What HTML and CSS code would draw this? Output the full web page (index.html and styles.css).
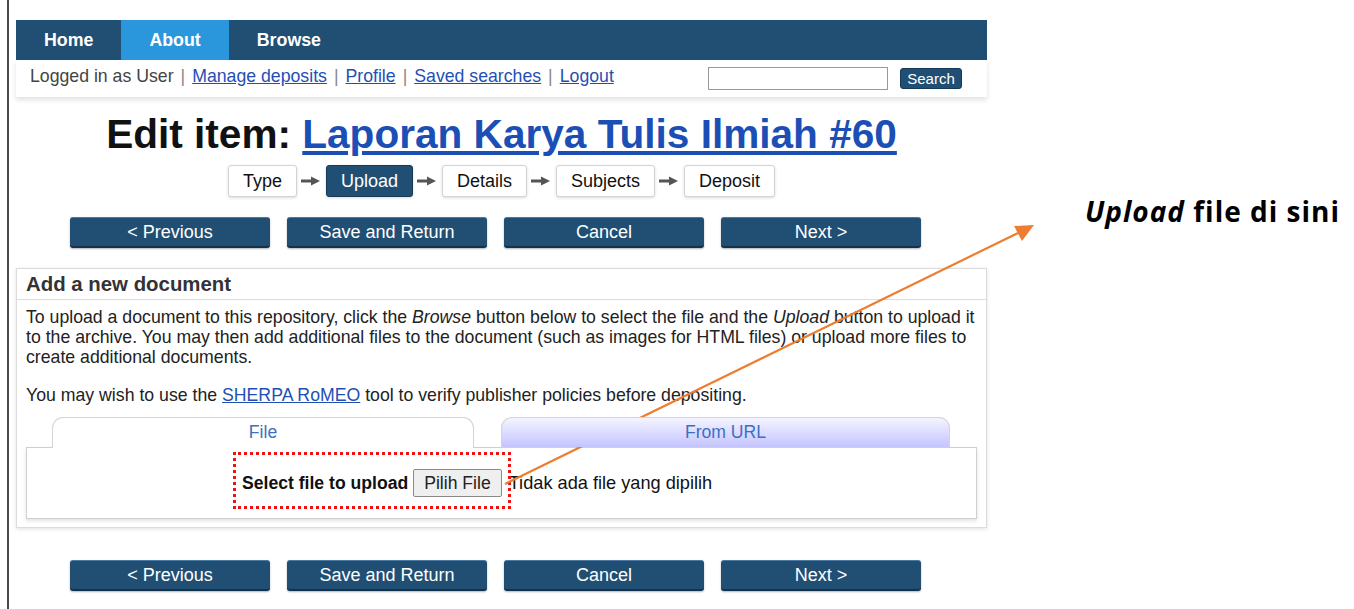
FILE: index.html
```html
<!DOCTYPE html>
<html>
<head>
<meta charset="utf-8">
<link rel="stylesheet" href="styles.css">
</head>
<body>
<div class="page">
  <div class="site">
    <nav class="menu">
      <a class="menu-item">Home</a>
      <a class="menu-item active">About</a>
      <a class="menu-item">Browse</a>
    </nav>
    <div class="userbar">
      <div class="userlinks">
        <span>Logged in as User</span><span class="sep">|</span><a href="#">Manage deposits</a><span class="sep">|</span><a href="#">Profile</a><span class="sep">|</span><a href="#">Saved searches</a><span class="sep">|</span><a href="#">Logout</a>
      </div>
      <div class="search">
        <input type="text" class="search-input">
        <button class="search-btn">Search</button>
      </div>
    </div>

    <h1 class="title">Edit item: <a href="#">Laporan Karya Tulis Ilmiah #60</a></h1>

    <div class="workflow">
      <span class="step">Type</span>
      <svg class="arrow" width="29" height="12" viewBox="0 0 29 12"><rect x="4" y="4.5" width="12" height="3" fill="#555"/><polygon points="14,1.5 23,6 14,10.5" fill="#555"/></svg>
      <span class="step current">Upload</span>
      <svg class="arrow" width="29" height="12" viewBox="0 0 29 12"><rect x="4" y="4.5" width="12" height="3" fill="#555"/><polygon points="14,1.5 23,6 14,10.5" fill="#555"/></svg>
      <span class="step">Details</span>
      <svg class="arrow" width="29" height="12" viewBox="0 0 29 12"><rect x="4" y="4.5" width="12" height="3" fill="#555"/><polygon points="14,1.5 23,6 14,10.5" fill="#555"/></svg>
      <span class="step">Subjects</span>
      <svg class="arrow" width="29" height="12" viewBox="0 0 29 12"><rect x="4" y="4.5" width="12" height="3" fill="#555"/><polygon points="14,1.5 23,6 14,10.5" fill="#555"/></svg>
      <span class="step">Deposit</span>
    </div>

    <div class="buttons top">
      <button class="btn">&lt; Previous</button>
      <button class="btn">Save and Return</button>
      <button class="btn">Cancel</button>
      <button class="btn">Next &gt;</button>
    </div>

    <section class="panel">
      <div class="panel-head">Add a new document</div>
      <div class="panel-body">
        <p class="para">To upload a document to this repository, click the <i>Browse</i> button below to select the file and the <i>Upload</i> button to upload it to the archive. You may then add additional files to the document (such as images for HTML files) or upload more files to create additional documents.</p>
        <p class="para second">You may wish to use the <a href="#">SHERPA RoMEO</a> tool to verify publisher policies before depositing.</p>
        <div class="tabs">
          <div class="tab tab-file">File</div>
          <div class="tab tab-url">From URL</div>
        </div>
        <div class="tab-content">
          <b class="upload-label">Select file to upload</b>
          <span class="file-btn">Pilih File</span>
          <span class="file-none">Tidak ada file yang dipilih</span>
        </div>
      </div>
    </section>

    <div class="buttons bottom">
      <button class="btn">&lt; Previous</button>
      <button class="btn">Save and Return</button>
      <button class="btn">Cancel</button>
      <button class="btn">Next &gt;</button>
    </div>
  </div>
</div>

<div class="mark"></div>
<svg class="callout-arrow" width="1354" height="609" viewBox="0 0 1354 609">
  <line x1="505" y1="484" x2="1018" y2="233" stroke="#ed7d31" stroke-width="2.2"/>
  <polygon points="1034,225 1014,226 1022,241" fill="#ed7d31"/>
</svg>
<div class="callout-text"><i>Upload</i> file di sini</div>
</body>
</html>
```
FILE: styles.css
```css
html, body {
  margin: 0;
  padding: 0;
  background: #fff;
}
body {
  font-family: "Liberation Sans", Arial, sans-serif;
  color: #222;
  position: relative;
  width: 1354px;
  height: 609px;
  overflow: hidden;
}
.page {
  margin-left: 7px;
  border-left: 2px solid #4a4a4a;
  padding-left: 7px;
  height: 609px;
  padding-top: 20px;
  box-sizing: border-box;
}
.site {
  width: 971px;
}
.menu {
  display: flex;
  height: 40px;
  background: #214f74;
}
.menu-item {
  display: flex;
  align-items: center;
  padding: 0 28px;
  color: #fff;
  font-weight: bold;
  font-size: 17.8px;
}
.menu-item.active {
  background: #2a97dc;
}
.userbar {
  display: flex;
  align-items: center;
  justify-content: space-between;
  height: 37px;
  background: #fff;
  box-shadow: 0 3px 5px rgba(0,0,0,0.12);
  padding: 0 25px 0 14px;
}
.userlinks {
  font-size: 17.7px;
  color: #444;
  margin-top: -4px;
}
.userlinks a {
  color: #1f4fb5;
}
.sep {
  color: #888;
  margin: 0 7px;
}
.search {
  display: flex;
  align-items: center;
  gap: 12px;
}
.search-input {
  width: 176px;
  height: 19px;
  border: 1px solid #999;
  padding: 1px;
  margin: 0;
}
.search-btn {
  width: 62px;
  height: 21px;
  background: #214f74;
  color: #fff;
  border: 1px solid #163a57;
  border-radius: 3px;
  font-family: "Liberation Sans", Arial, sans-serif;
  font-size: 15px;
  padding: 0;
}
.title {
  margin: 16px 0 0;
  text-align: center;
  font-size: 40.6px;
  line-height: 42px;
  font-weight: bold;
  color: #111;
}
.title a {
  color: #1b4fb5;
}
.workflow {
  display: flex;
  justify-content: center;
  align-items: center;
  margin-top: 10px;
  height: 32px;
}
.step {
  display: flex;
  align-items: center;
  height: 30px;
  padding: 0 14px;
  border: 1px solid #d4d4d4;
  border-radius: 3px;
  background: #fff;
  box-shadow: 0 1px 3px rgba(0,0,0,0.15);
  font-size: 18px;
  color: #111;
}
.step.current {
  background: #214f74;
  color: #fff;
  border-color: #163a57;
}
.arrow {
  display: block;
}
.buttons {
  display: flex;
  justify-content: center;
  gap: 17px;
  padding-right: 12px;
}
.buttons.top {
  margin-top: 20px;
}
.buttons.bottom {
  margin-top: 32px;
}
.btn {
  width: 200px;
  height: 31px;
  background: #214f74;
  color: #fff;
  border: none;
  border-top: 1px solid #4a7aa3;
  border-bottom: 2px solid #12324d;
  border-radius: 3px;
  font-family: "Liberation Sans", Arial, sans-serif;
  font-size: 18px;
  box-shadow: 0 1px 2px rgba(0,0,0,0.3);
  padding: 0;
}
.panel {
  margin-top: 20px;
  border: 1px solid #dcdcdc;
  box-shadow: 0 1px 4px rgba(0,0,0,0.12);
  background: #fff;
}
.panel-head {
  height: 30px;
  line-height: 30px;
  padding-left: 9px;
  border-bottom: 1px solid #dcdcdc;
  font-weight: bold;
  font-size: 20.4px;
  color: #333;
}
.panel-body {
  padding: 7px 9px 8px;
}
.para {
  margin: 0;
  font-size: 17.7px;
  line-height: 20px;
  color: #222;
}
.para.second {
  margin-top: 18px;
}
.para a {
  color: #1f4fb5;
}
.tabs {
  display: flex;
  gap: 27px;
  padding-left: 26px;
  margin-top: 12px;
  position: relative;
  z-index: 1;
  margin-bottom: -1px;
}
.tab {
  height: 29px;
  line-height: 29px;
  text-align: center;
  font-size: 17.6px;
  color: #3d6fc4;
  border: 1px solid #d4d4d4;
  border-bottom: none;
  border-radius: 11px 11px 0 0;
}
.tab-file {
  width: 420px;
  background: #fff;
  height: 30px;
}
.tab-url {
  width: 447px;
  background: linear-gradient(#f4f4ff, #c4c4ff);
}
.tab-content {
  border: 1px solid #d0d0d0;
  box-shadow: 0 2px 4px rgba(0,0,0,0.12);
  height: 70px;
  display: flex;
  align-items: center;
  padding-left: 215px;
  font-size: 18.2px;
  color: #111;
}
.upload-label {
  font-size: 17.6px;
  margin-right: 5px;
}
.file-btn {
  display: inline-block;
  height: 26px;
  line-height: 26px;
  padding: 0 10px;
  background: #efefef;
  border: 1px solid #8a8a8a;
  border-radius: 2px;
  color: #222;
  font-size: 17.6px;
  margin-right: 7px;
}
.mark {
  position: absolute;
  left: 233px;
  top: 452px;
  width: 278px;
  height: 57px;
  box-sizing: border-box;
  border: 3px dotted #f01010;
}
.callout-arrow {
  position: absolute;
  left: 0;
  top: 0;
  pointer-events: none;
}
.callout-text {
  position: absolute;
  left: 1085px;
  top: 192px;
  font-family: "Open Sans", "Noto Sans", sans-serif;
  font-weight: bold;
  font-size: 28px;
  letter-spacing: 1px;
  line-height: 38px;
  color: #000;
}
```
